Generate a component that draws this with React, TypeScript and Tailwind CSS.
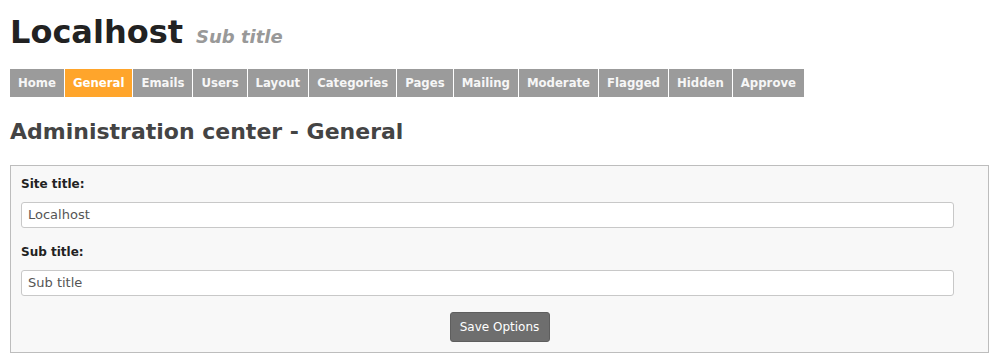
import React from "react";

const tabs = ["Home", "General", "Emails", "Users", "Layout", "Categories", "Pages", "Mailing", "Moderate", "Flagged", "Hidden", "Approve"];

export default function App() {
  return (
    <div className="w-[999px] h-[362px] bg-white px-[10px] pt-[12px]" style={{ fontFamily: '"DejaVu Sans", Verdana, sans-serif' }}>
      <div className="flex items-baseline gap-[13px] h-[40px]">
        <h1 className="text-[32px] leading-[40px] font-bold text-[#222]">Localhost</h1>
        <span className="text-[18px] italic font-bold text-[#999]">Sub title</span>
      </div>
      <div className="flex mt-[17px] h-[28px] gap-[1px]" style={{ fontFamily: '"DejaVu Sans Condensed", "DejaVu Sans", sans-serif' }}>
        {tabs.map((t) => (
          <div
            key={t}
            className={`px-[8px] flex items-center text-[13px] font-bold ${t === "General" ? "bg-[#ffa52b] text-white" : "bg-[#9b9b9b] text-[#f6f6f6]"}`}
          >
            {t}
          </div>
        ))}
      </div>
      <h2 className="mt-[21px] text-[22px] font-bold text-[#444] leading-[28px]">Administration center - General</h2>
      <div className="mt-[19px] w-[979px] h-[188px] border border-[#bdbdbd] bg-[#f8f8f8] px-[10px] pt-[10px]">
        <div className="text-[12px] font-bold text-[#222] h-[16px] leading-[16px]">Site title:</div>
        <div className="mt-[10px] w-[933px] h-[26px] rounded-[3px] border border-[#c8c8c8] bg-white px-[6px] flex items-center text-[13px] text-[#555]">Localhost</div>
        <div className="mt-[16px] text-[12px] font-bold text-[#222] h-[16px] leading-[16px]">Sub title:</div>
        <div className="mt-[10px] w-[933px] h-[26px] rounded-[3px] border border-[#c8c8c8] bg-white px-[6px] flex items-center text-[13px] text-[#555]">Sub title</div>
        <div className="flex justify-center mt-[16px]">
          <button className="w-[100px] h-[30px] rounded-[3px] bg-[#6e6e6e] border border-[#5e5e5e] text-white text-[12px]">Save Options</button>
        </div>
      </div>
    </div>
  );
}
